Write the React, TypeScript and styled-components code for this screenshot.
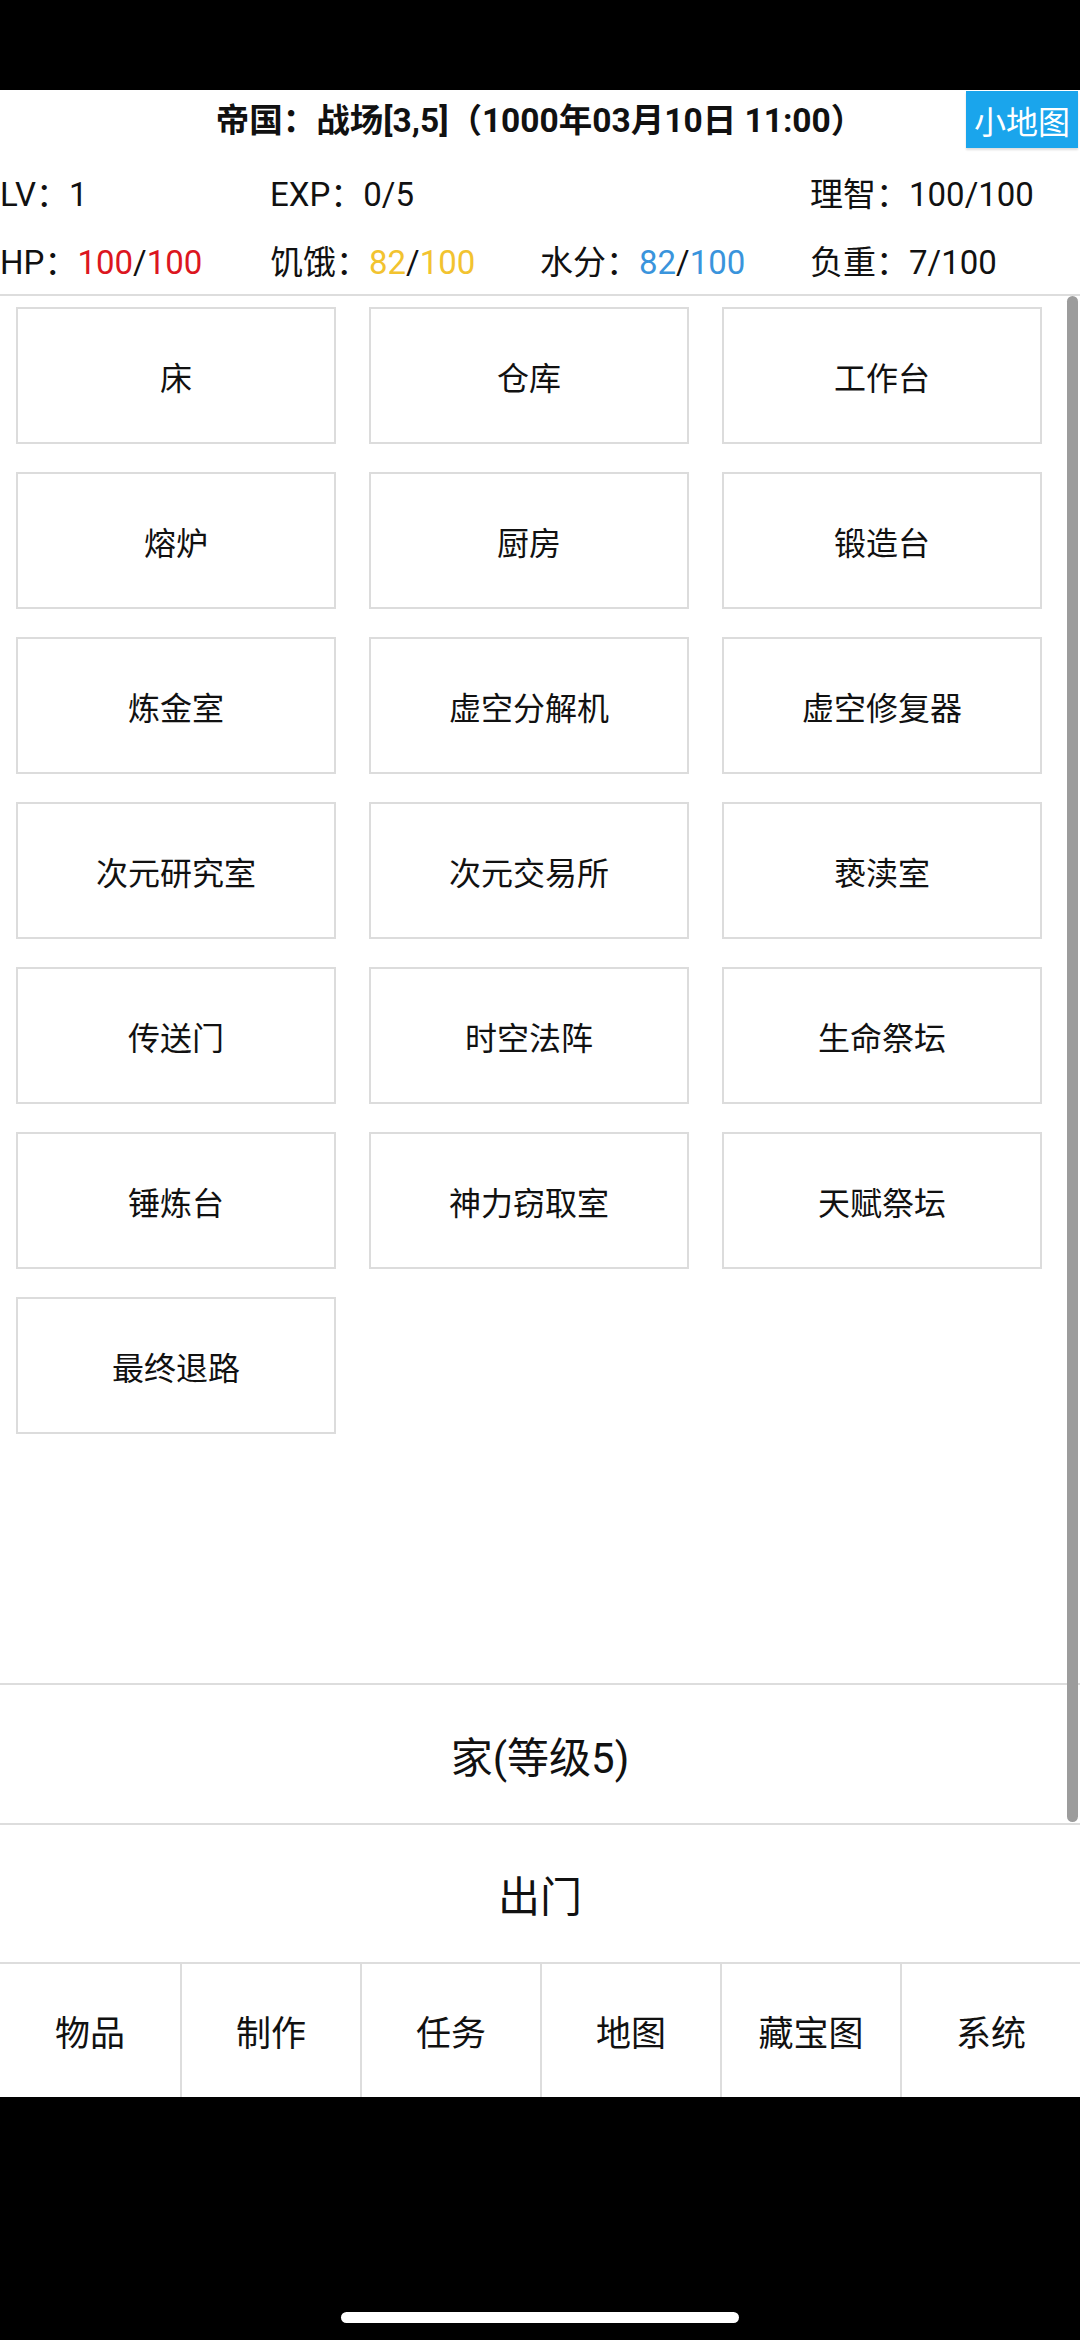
import React, { ReactElement } from "react";
import styled, { createGlobalStyle } from "styled-components";

const GlobalStyle = createGlobalStyle`
  html, body {
    margin: 0;
    padding: 0;
    background: #000;
  }
  * {
    box-sizing: border-box;
  }
  body {
    font-family: Roboto, "Noto Sans CJK SC", "Noto Sans", sans-serif;
    color: #111;
  }
`;

const rooms = [
  "床",
  "仓库",
  "工作台",
  "熔炉",
  "厨房",
  "锻造台",
  "炼金室",
  "虚空分解机",
  "虚空修复器",
  "次元研究室",
  "次元交易所",
  "亵渎室",
  "传送门",
  "时空法阵",
  "生命祭坛",
  "锤炼台",
  "神力窃取室",
  "天赋祭坛",
  "最终退路",
];

const tabs = ["物品", "制作", "任务", "地图", "藏宝图", "系统"];

interface StatProps {
  label: string;
  value: string;
  max?: string;
  color?: string;
}

function Stat({ label, value, max, color }: StatProps): ReactElement {
  return (
    <SStat>
      {label}：
      {max ? (
        <>
          <SStatNum $color={color}>{value}</SStatNum>/
          <SStatNum $color={color}>{max}</SStatNum>
        </>
      ) : (
        value
      )}
    </SStat>
  );
}

export default function App(): ReactElement {
  return (
    <>
      <GlobalStyle />
      <SPhone>
        <SStatusBar />
        <SScreen>
          <SHeader>
            <span />
            <STitle>帝国：战场[3,5]（1000年03月10日 11:00）</STitle>
            <SMapButton>小地图</SMapButton>
          </SHeader>
          <SStats>
            <SStatRow>
              <Stat label="LV" value="1" />
              <Stat label="EXP" value="0/5" />
              <span />
              <Stat label="理智" value="100/100" />
            </SStatRow>
            <SStatRow>
              <Stat label="HP" value="100" max="100" color="#dc1620" />
              <Stat label="饥饿" value="82" max="100" color="#f2c330" />
              <Stat label="水分" value="82" max="100" color="#3a94dc" />
              <Stat label="负重" value="7/100" />
            </SStatRow>
          </SStats>
          <SScrollArea>
            <SRoomGrid>
              {rooms.map((room) => (
                <SRoomCard key={room}>{room}</SRoomCard>
              ))}
            </SRoomGrid>
            <SHomeLevel>家(等级5)</SHomeLevel>
            <SScrollThumb />
          </SScrollArea>
          <SGoOut>出门</SGoOut>
          <STabBar>
            {tabs.map((tab) => (
              <STab key={tab}>{tab}</STab>
            ))}
          </STabBar>
        </SScreen>
        <SHomeBar>
          <SHomeIndicator />
        </SHomeBar>
      </SPhone>
    </>
  );
}

const SPhone = styled.div`
  width: 1080px;
  height: 2340px;
  background: #000;
  display: flex;
  flex-direction: column;
`;
const SStatusBar = styled.div`
  height: 90px;
  flex-shrink: 0;
`;
const SScreen = styled.div`
  height: 2007px;
  background: #fff;
  display: flex;
  flex-direction: column;
`;
const SHeader = styled.div`
  height: 62px;
  display: grid;
  grid-template-columns: 1fr auto 1fr;
  align-items: center;
`;
const STitle = styled.h1`
  margin: 0;
  font-size: 33.5px;
  font-weight: 700;
  color: #111;
  white-space: nowrap;
  line-height: 1;
`;
const SMapButton = styled.div`
  justify-self: end;
  align-self: start;
  margin-top: 1px;
  margin-right: 2px;
  width: 112px;
  height: 57px;
  background: #1aa5ec;
  color: #fff;
  font-size: 32px;
  display: flex;
  align-items: center;
  justify-content: center;
  box-shadow: 0 2px 2px #ddd;
`;
const SStats = styled.div`
  padding-top: 6px;
  border-bottom: 2px solid #ddd;
`;
const SStatRow = styled.div`
  display: grid;
  grid-template-columns: repeat(4, 270px);
  height: 68px;
  align-items: center;
`;
const SStat = styled.div`
  font-size: 33px;
  color: #111;
  white-space: nowrap;
`;
const SStatNum = styled.span<{ $color?: string }>`
  color: ${({ $color }) => $color || "#111"};
`;
const SScrollArea = styled.div`
  position: relative;
  height: 1527px;
  display: flex;
  flex-direction: column;
`;
const SRoomGrid = styled.div`
  flex: 1;
  display: grid;
  grid-template-columns: repeat(3, 320px);
  grid-auto-rows: 137px;
  column-gap: 33px;
  row-gap: 28px;
  padding: 11px 0 0 16px;
  align-content: start;
`;
const SRoomCard = styled.div`
  border: 2px solid #dcdcdc;
  display: flex;
  align-items: center;
  justify-content: center;
  font-size: 32px;
  color: #111;
`;
const SHomeLevel = styled.div`
  height: 140px;
  border-top: 2px solid #ddd;
  display: flex;
  align-items: center;
  justify-content: center;
  font-size: 42px;
  color: #111;
`;
const SScrollThumb = styled.div`
  position: absolute;
  top: 0;
  bottom: 1px;
  right: 2px;
  width: 11px;
  border-radius: 6px;
  background: #9c9c9c;
`;
const SGoOut = styled.div`
  height: 141px;
  border-top: 2px solid #ddd;
  border-bottom: 2px solid #ddd;
  display: flex;
  align-items: center;
  justify-content: center;
  font-size: 42px;
  color: #111;
`;
const STabBar = styled.div`
  flex: 1;
  display: grid;
  grid-template-columns: repeat(6, 1fr);
`;
const STab = styled.div`
  display: flex;
  align-items: center;
  justify-content: center;
  font-size: 35px;
  color: #111;
  & + & {
    border-left: 2px solid #ddd;
  }
`;
const SHomeBar = styled.div`
  flex: 1;
  padding-top: 215px;
  display: flex;
  justify-content: center;
`;
const SHomeIndicator = styled.div`
  width: 398px;
  height: 11px;
  border-radius: 6px;
  background: #fff;
`;
